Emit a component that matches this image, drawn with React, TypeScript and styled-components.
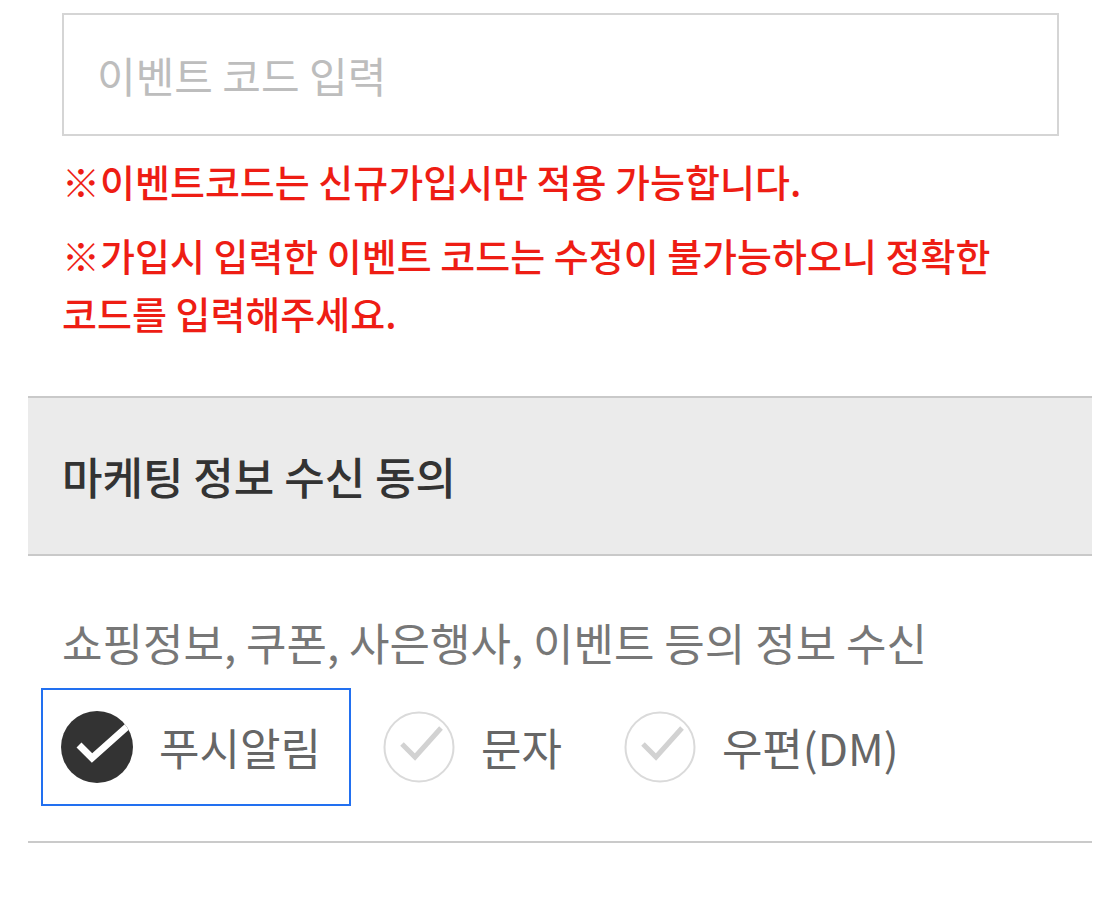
import React from "react";
import styled, { createGlobalStyle } from "styled-components";

const GlobalStyle = createGlobalStyle`
  html, body {
    margin: 0;
    padding: 0;
    background: #ffffff;
  }
  body {
    font-family: "Noto Sans CJK KR", "Noto Sans", sans-serif;
    -webkit-font-smoothing: antialiased;
  }
  * { box-sizing: border-box; }
`;

const Page = styled.div`
  padding: 0 20px 0 28px;
`;

const Content = styled.div`
  padding: 13px 33px 0 34px;
`;

const CodeInput = styled.input`
  display: block;
  width: 100%;
  height: 123px;
  border: 2px solid #d5d5d5;
  border-radius: 0;
  padding: 0 0 0 33px;
  font-family: inherit;
  font-size: 42px;
  color: #333;
  background: #fff;
  outline: none;
  &::placeholder {
    color: #bdbdbd;
  }
`;

const Notice = styled.p`
  margin: 16px 0 0;
  color: #ee1d14;
  font-size: 38px;
  font-weight: 500;
  line-height: 58px;
`;

const Section = styled.section`
  margin-top: 54px;
  border-bottom: 2px solid #cacaca;
`;

const SectionHeader = styled.h2`
  margin: 0;
  height: 160px;
  display: flex;
  align-items: center;
  padding: 0 0 0 34px;
  background: #ebebeb;
  border-top: 2px solid #c9c9c9;
  border-bottom: 2px solid #c9c9c9;
  color: #333;
  font-size: 44px;
  font-weight: 500;
`;

const SectionBody = styled.div`
  padding: 56px 0 35px 13px;
`;

const Description = styled.p`
  margin: 0 0 16px 21px;
  color: #777;
  font-size: 44px;
  line-height: 60px;
`;

const Options = styled.div`
  display: flex;
  align-items: center;
  gap: 12px;
`;

const Option = styled.label<{ $focused?: boolean }>`
  display: flex;
  align-items: center;
  gap: 26px;
  padding: 21px 28px 21px 18px;
  border: 2px solid ${(p) => (p.$focused ? "#2270f0" : "transparent")};
  cursor: pointer;
`;

const OptionLabel = styled.span`
  color: #666;
  font-size: 44px;
  line-height: 72px;
`;

const CheckSvg = styled.svg`
  display: block;
  width: 72px;
  height: 72px;
  flex: none;
`;

function CheckCircle({ checked }: { checked: boolean }) {
  if (checked) {
    return (
      <CheckSvg viewBox="0 0 72 72">
        <defs>
          <clipPath id="cc">
            <circle cx="36" cy="36" r="36" />
          </clipPath>
        </defs>
        <circle cx="36" cy="36" r="36" fill="#333333" />
        <polyline
          clipPath="url(#cc)"
          points="18,34 31,47 68,14"
          fill="none"
          stroke="#ffffff"
          strokeWidth="7"
          strokeLinejoin="miter"
        />
      </CheckSvg>
    );
  }
  return (
    <CheckSvg viewBox="0 0 72 72">
      <circle cx="36" cy="36" r="34.5" fill="#ffffff" stroke="#dadada" strokeWidth="2" />
      <polyline
        points="19,33 32,46 58,17"
        fill="none"
        stroke="#d2d2d2"
        strokeWidth="5"
        strokeLinejoin="miter"
      />
    </CheckSvg>
  );
}

const options = [
  { label: "푸시알림", checked: true, focused: true },
  { label: "문자", checked: false, focused: false },
  { label: "우편(DM)", checked: false, focused: false },
];

export default function App() {
  return (
    <>
      <GlobalStyle />
      <Page>
        <Content>
          <CodeInput placeholder="이벤트 코드 입력" />
          <Notice>※이벤트코드는 신규가입시만 적용 가능합니다.</Notice>
          <Notice>
            ※가입시 입력한 이벤트 코드는 수정이 불가능하오니 정확한
            <br />
            코드를 입력해주세요.
          </Notice>
        </Content>
        <Section>
          <SectionHeader>마케팅 정보 수신 동의</SectionHeader>
          <SectionBody>
            <Description>쇼핑정보, 쿠폰, 사은행사, 이벤트 등의 정보 수신</Description>
            <Options>
              {options.map((o) => (
                <Option key={o.label} $focused={o.focused}>
                  <CheckCircle checked={o.checked} />
                  <OptionLabel>{o.label}</OptionLabel>
                </Option>
              ))}
            </Options>
          </SectionBody>
        </Section>
      </Page>
    </>
  );
}
